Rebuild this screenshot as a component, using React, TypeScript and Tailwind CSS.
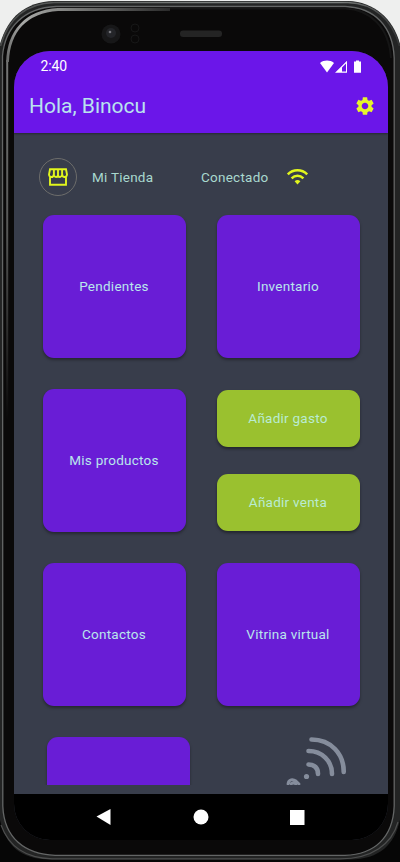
import React from "react";
import { MdSettings } from "react-icons/md";

function Tile({ label, className = "" }: { label?: string; className?: string }) {
  return (
    <div
      className={`flex h-[143px] w-[143px] shrink-0 items-center justify-center rounded-[11px] bg-[#691dd6] pr-px text-[13.5px] tracking-[0.25px] text-[#b9e6ec] shadow-[0_2px_3px_rgba(0,0,0,0.35)] ${className}`}
    >
      {label}
    </div>
  );
}

function Action({ label }: { label: string }) {
  return (
    <div className="flex h-[57px] w-[143px] items-center justify-center rounded-[11px] bg-[#9ac12f] pr-px text-[13.5px] tracking-[0.25px] text-[#b9ecd2] shadow-[0_2px_3px_rgba(0,0,0,0.4)]">
      {label}
    </div>
  );
}

function PhoneBezel() {
  return (
    <svg className="absolute inset-0 h-[862px] w-[400px]" viewBox="0 0 400 862" fill="none">
      <defs>
        <linearGradient id="sheen" gradientUnits="userSpaceOnUse" x1="8" y1="60" x2="170" y2="9">
          <stop offset="0" stopColor="#6c6d6c" />
          <stop offset="0.15" stopColor="#a9aaa8" />
          <stop offset="0.35" stopColor="#8b8c8a" />
          <stop offset="1" stopColor="#2a2a2a" />
        </linearGradient>
        <linearGradient id="rim" gradientUnits="userSpaceOnUse" x1="0" y1="0" x2="400" y2="0">
          <stop offset="0" stopColor="#4a4c4b" />
          <stop offset="0.5" stopColor="#7c807e" />
          <stop offset="0.85" stopColor="#7c807e" />
          <stop offset="1" stopColor="#343536" />
        </linearGradient>
        <linearGradient id="side" gradientUnits="userSpaceOnUse" x1="0" y1="50" x2="0" y2="420">
          <stop offset="0" stopColor="#777877" />
          <stop offset="0.5" stopColor="#555655" />
          <stop offset="1" stopColor="#0a0909" />
        </linearGradient>
      </defs>
      <rect x="0" y="80" width="400" height="782" fill="#060606" />
      <path d="M0 820V44C8 17 25 2 54 1H348C374 2 393 18 400 44V820C394 845 380 859 350 859.5H50C20 859.5 6 845 0 820Z" fill="#232424" />
      <path d="M.5 46C8 19 26 3.5 54 2.5H348C374 3.5 392 19 399.5 46" stroke="url(#rim)" strokeWidth="1.5" />
      <path d="M2.5 56C5 27 24 8 56 6.5H345C375 7.5 393 27 394.2 58V806C393 838 374 854.5 345 855.3H55C25 854.5 4 838 2.8 806Z" fill="#0a0909" stroke="#646666" strokeWidth="1.3" />
      <path d="M1 825C9 847 25 858 52 858.8H340C372 858.8 392 844 398 822" stroke="#4d4e4e" strokeWidth="1.2" />
      <path d="M56 8.5H345C370 9.5 389 27 391 58" stroke="#151515" strokeWidth="2" />
      <path d="M7.2 60V420" stroke="url(#side)" strokeWidth="2" />
      <path d="M7.5 62C8.5 31 26 11.5 58 9.5H170" stroke="url(#sheen)" strokeWidth="2.8" />
      <circle cx="111" cy="34" r="9.5" fill="#171718" />
      <circle cx="111" cy="33" r="5" fill="#242529" />
      <circle cx="110" cy="32" r="1.3" fill="#77777d" />
      <circle cx="135" cy="28" r="4" stroke="#171717" />
      <circle cx="135" cy="39" r="4" stroke="#171717" />
      <rect x="180" y="30.5" width="42" height="6.5" rx="3" fill="#242424" />
    </svg>
  );
}

export default function App() {
  return (
    <div className="relative flex h-[862px] w-[400px] overflow-hidden bg-[#eeefee] pl-[14px] pt-[51px] font-['Roboto',sans-serif]">
      <PhoneBezel />
      <main className="relative flex h-[789px] w-[374px] flex-col overflow-hidden rounded-[36px] bg-[#383d4b]">
        <header className="h-[82px] shrink-0 bg-[#6b16e9] shadow-[0_1px_2px_rgba(0,0,0,0.35)]">
          <div className="flex h-[31px] items-center pl-[26.5px] text-[14px] tracking-[-0.1px] text-white">
            <span>2:40</span>
            <svg className="ml-auto mr-[25px] h-[14px] w-[43px]" viewBox="0 0 43 14" fill="white">
              <path d="M0 3C4 -.2 10 -.2 14 3L7 12.5Z" />
              <path fillRule="evenodd" d="M15 12.7 27 .7V12.7ZM22 11.5H26V3.5L22 7.5Z" />
              <path d="M34 1.5h2V.5h3v1h2v11.2h-7z" />
            </svg>
          </div>
          <div className="flex h-[48px] items-center pl-[15px] pr-[12px]">
            <h1 className="text-[21px] leading-6 text-[#b9e3ee]">Hola, Binocu</h1>
            <MdSettings className="ml-auto h-[22px] w-[22px] text-[#e5f52b]" />
          </div>
        </header>
        <section className="h-[652px] shrink-0 overflow-hidden pt-[24px]">
          <div className="flex h-[39px] items-center pl-[25px] text-[13.5px] tracking-[0.25px] text-[#a9d9cf]">
            <div className="flex h-[38px] w-[38px] items-center justify-center rounded-full border border-[#6d6d6b]">
              <svg width="20" height="18" viewBox="0 0 20 18" fill="none" stroke="#e1f51d" strokeWidth="1.9">
                <path d="M2 1.2H18L19 6.5Q18.8 9 16.5 9Q14.5 9 14.3 7Q13 9 12 9Q10 9 10 7Q10 9 8 9Q6.5 9 5.7 7Q5.4 9 3.5 9Q1.2 9 1 6.5ZM5.9 1V7M10 1V7M14.1 1V7M2 8.5V16.8H18V8.5" />
              </svg>
            </div>
            <span className="ml-[15px] w-[109px] pt-px">Mi Tienda</span>
            <span className="w-[85px] pt-px">Conectado</span>
            <svg width="23" height="18" viewBox="0 0 23 18" fill="none" stroke="#e1f51d" strokeWidth="2.5">
              <path d="M1.8 6.4C7.2 1 15.8 1 21.2 6.4M5.6 10.3C9 7 14 7 17.4 10.3" />
              <path d="M8.6 13.2Q11.5 11 14.4 13.2L11.5 16.4Z" fill="#e1f51d" stroke="none" />
            </svg>
          </div>
          <div className="grid grid-cols-[143px_143px] gap-x-[31px] gap-y-[31px] pl-[29px] pt-[19px]">
            <Tile label="Pendientes" />
            <Tile label="Inventario" />
            <Tile label="Mis productos" />
            <div className="flex flex-col gap-[27px] pt-px">
              <Action label="Añadir gasto" />
              <Action label="Añadir venta" />
            </div>
            <Tile label="Contactos" />
            <Tile label="Vitrina virtual" />
            <Tile className="ml-[4px]" />
            <svg className="ml-[69px] h-[48px] w-[62px]" viewBox="0 0 62 48" fill="none" stroke="#858d9c" strokeWidth="4.6" strokeLinecap="round">
              <path d="M25.5 2.5C45 2.5 58 17 57.7 35M22.5 14C36 14 46 24 46 37M22.5 27.5Q32 28 32 37" />
              <circle cx="20.5" cy="39.5" r="2.6" fill="#858d9c" stroke="none" />
              <path d="M2 47C2.5 42 7 42 10 44L13 47M5 46.8Q7.5 45.2 10 47" strokeWidth="2.8" />
            </svg>
          </div>
        </section>
        <div className="h-[9px] shrink-0" />
        <nav className="flex h-[46px] shrink-0 items-center justify-center bg-black">
          <svg className="h-[18px] w-[210px]" viewBox="0 0 210 18" fill="white">
            <path d="M.5 8.5 14.5 1V17Z" />
            <circle cx="105" cy="9" r="7.5" />
            <rect x="194" y="2" width="14.5" height="15" />
          </svg>
        </nav>
      </main>
    </div>
  );
}
